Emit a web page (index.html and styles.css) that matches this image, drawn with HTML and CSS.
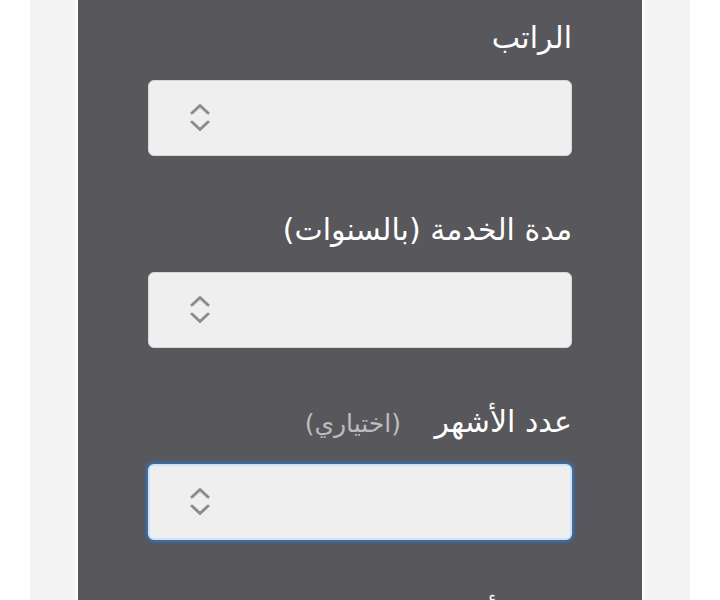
FILE: index.html
```html
<!DOCTYPE html>
<html lang="ar" dir="rtl">
<head>
<meta charset="utf-8">
<title>حاسبة</title>
<link rel="stylesheet" href="styles.css">
</head>
<body>
<div class="page">
  <div class="panel">
    <div class="field">
      <label class="label">الراتب</label>
      <div class="box">
        <svg class="spin" width="20" height="30" viewBox="0 0 20 30"><polyline points="2,10 10,2.5 18,10"/><polyline points="2,19 10,26.5 18,19"/></svg>
      </div>
    </div>
    <div class="field">
      <label class="label">مدة الخدمة (بالسنوات)</label>
      <div class="box">
        <svg class="spin" width="20" height="30" viewBox="0 0 20 30"><polyline points="2,10 10,2.5 18,10"/><polyline points="2,19 10,26.5 18,19"/></svg>
      </div>
    </div>
    <div class="field">
      <label class="label">عدد الأشهر <span class="opt">(اختياري)</span></label>
      <div class="box focus">
        <svg class="spin" width="20" height="30" viewBox="0 0 20 30"><polyline points="2,10 10,2.5 18,10"/><polyline points="2,19 10,26.5 18,19"/></svg>
      </div>
    </div>
    <div class="field">
      <label class="label">عدد الأيام <span class="opt">(اختياري)</span></label>
      <div class="box">
        <svg class="spin" width="20" height="30" viewBox="0 0 20 30"><polyline points="2,10 10,2.5 18,10"/><polyline points="2,19 10,26.5 18,19"/></svg>
      </div>
    </div>
  </div>
</div>
</body>
</html>
```
FILE: styles.css
```css
html, body {
  margin: 0;
  padding: 0;
  background: #ffffff;
  height: 100%;
  overflow: hidden;
}
.page {
  margin: 0 30px;
  padding: 0 45px;
  background: #f4f4f4;
  min-height: 100%;
}
.panel {
  background: #58575c;
  border-left: 3px solid #fbfbfb;
  border-right: 3px solid #fbfbfb;
  padding: 18px 70px 40px;
  min-height: 700px;
  font-family: "DejaVu Sans", sans-serif;
}
.field {
  margin-bottom: 54px;
}
.label {
  display: block;
  height: 44px;
  line-height: 40px;
  margin-bottom: 18px;
  font-size: 30px;
  color: #ffffff;
  text-align: right;
  white-space: nowrap;
}
.opt {
  font-size: 25px;
  color: #bdbcc0;
  margin-right: 24px;
}
.box {
  direction: ltr;
  height: 76px;
  box-sizing: border-box;
  background: #efefef;
  border: 1px solid #d6d6d6;
  border-radius: 6px;
  display: flex;
  align-items: center;
  padding-left: 41px;
}
.box.focus {
  border: 2px solid #cfe3fb;
  box-shadow: 0 0 0 2px #3f6c9c, 0 0 4px 3px rgba(63, 108, 156, 0.6);
  padding-left: 40px;
}
.spin {
  fill: none;
  stroke: #8c8c8c;
  stroke-width: 3;
  stroke-linejoin: round;
  stroke-linecap: round;
}
```
